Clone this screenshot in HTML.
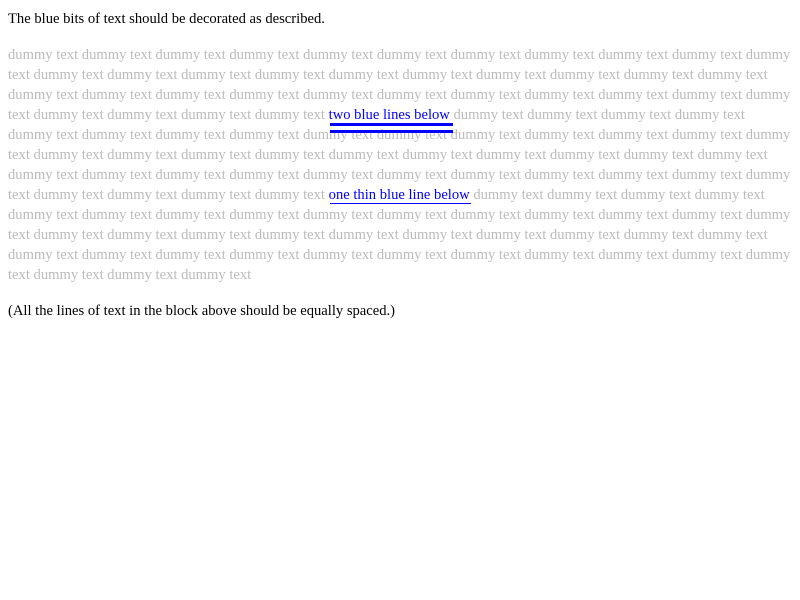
<!DOCTYPE html>
<html><head><style>
body{margin:0;background:#fff;font-family:"Liberation Serif",serif;font-size:14.6px;}
p{margin:0;position:absolute;left:8px;white-space:nowrap;}
.d{color:#bbb;line-height:20px;top:45px;}
.b{color:#00f;}
.l{position:absolute;background:#00f;}
</style></head><body>
<p style="top:9px;line-height:20px">The blue bits of text should be decorated as described.</p>
<p class="d">dummy text dummy text dummy text dummy text dummy text dummy text dummy text dummy text dummy text dummy text dummy<br>
text dummy text dummy text dummy text dummy text dummy text dummy text dummy text dummy text dummy text dummy text<br>
dummy text dummy text dummy text dummy text dummy text dummy text dummy text dummy text dummy text dummy text dummy<br>
text dummy text dummy text dummy text dummy text <span class="b">two blue lines below</span> dummy text dummy text dummy text dummy text<br>
dummy text dummy text dummy text dummy text dummy text dummy text dummy text dummy text dummy text dummy text dummy<br>
text dummy text dummy text dummy text dummy text dummy text dummy text dummy text dummy text dummy text dummy text<br>
dummy text dummy text dummy text dummy text dummy text dummy text dummy text dummy text dummy text dummy text dummy<br>
text dummy text dummy text dummy text dummy text <span class="b">one thin blue line below</span> dummy text dummy text dummy text dummy text<br>
dummy text dummy text dummy text dummy text dummy text dummy text dummy text dummy text dummy text dummy text dummy<br>
text dummy text dummy text dummy text dummy text dummy text dummy text dummy text dummy text dummy text dummy text<br>
dummy text dummy text dummy text dummy text dummy text dummy text dummy text dummy text dummy text dummy text dummy<br>
text dummy text dummy text dummy text</p>
<div class="l" style="left:330px;top:123px;width:123px;height:3px"></div>
<div class="l" style="left:330px;top:130px;width:123px;height:3px"></div>
<div class="l" style="left:330px;top:203px;width:141px;height:1px"></div>
<p style="top:301px;line-height:20px">(All the lines of text in the block above should be equally spaced.)</p>
</body></html>
